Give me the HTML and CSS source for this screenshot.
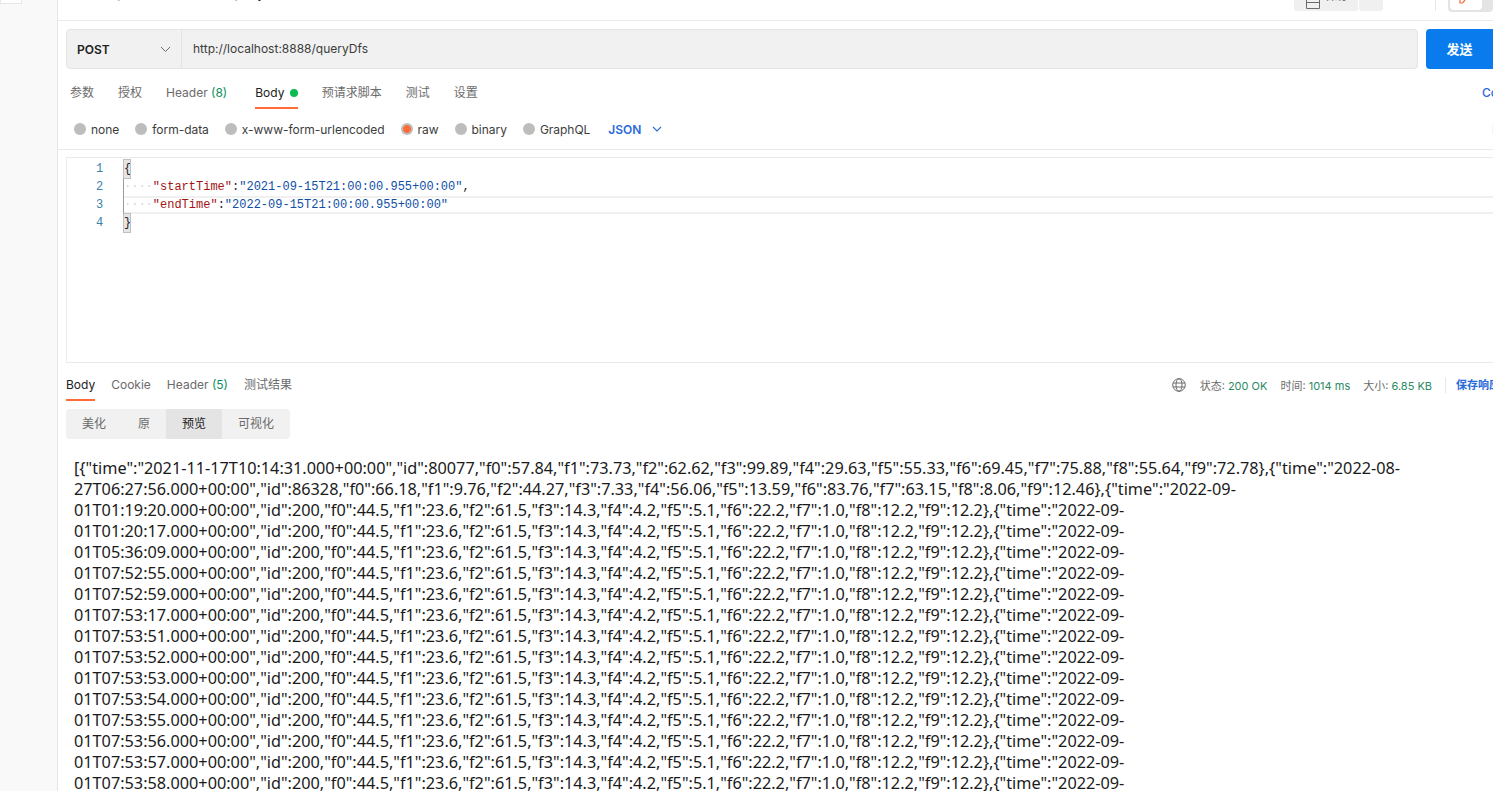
FILE: index.html
```html
<!DOCTYPE html>
<html lang="zh">
<head>
<meta charset="utf-8">
<title>queryDfs</title>
<link rel="stylesheet" href="styles.css">
</head>
<body>
<div class="app">
  <aside class="sidebar"><div class="side-tab"></div></aside>
  <main class="main">
    <header class="topbar">
      <div class="crumb">http://localhost:8888/queryDfs</div>
      <div class="top-actions">
        <div class="top-btn save">
          <svg class="save-icon" width="16" height="11" viewBox="0 0 16 11"><path d="M1.5 0v8.5h13V0M1.5 2.5h13" fill="none" stroke="#6b6b6b" stroke-width="1"/></svg>
          <span class="save-text">保存</span>
        </div>
        <div class="top-btn more"></div>
        <div class="top-divider"></div>
        <div class="mode-group">
          <div class="mode-on">
            <svg width="7" height="4" viewBox="0 0 7 4"><path d="M1 0v3h2.5L6 0" fill="none" stroke="#f26b3a" stroke-width="1.2"/></svg>
          </div>
        </div>
      </div>
    </header>

    <section class="urlbar">
      <div class="urlbox">
        <div class="method">
          <span>POST</span>
          <svg width="11" height="7" viewBox="0 0 11 7"><path d="M1 1l4.5 4.5L10 1" fill="none" stroke="#6b6b6b" stroke-width="1"/></svg>
        </div>
        <div class="url">http://localhost:8888/queryDfs</div>
      </div>
      <button class="send">发送</button>
    </section>

    <nav class="req-tabs">
      <span class="tab">参数</span>
      <span class="tab">授权</span>
      <span class="tab before-body">Header <em class="count">(8)</em></span>
      <span class="tab active">Body <i class="dot"></i></span>
      <span class="tab">预请求脚本</span>
      <span class="tab">测试</span>
      <span class="tab">设置</span>
      <span class="cookies">Cookies</span>
    </nav>

    <div class="body-types">
      <label class="radio"><i class="circle"></i>none</label>
      <label class="radio"><i class="circle"></i>form-data</label>
      <label class="radio"><i class="circle"></i>x-www-form-urlencoded</label>
      <label class="radio"><i class="circle checked"></i>raw</label>
      <label class="radio"><i class="circle"></i>binary</label>
      <label class="radio"><i class="circle"></i>GraphQL</label>
      <span class="json">JSON
        <svg width="10" height="6" viewBox="0 0 10 6"><path d="M1 1l4 4 4-4" fill="none" stroke="#2a6bd8" stroke-width="1.1"/></svg>
      </span>
      <span class="beautify">Beautify</span>
    </div>

    <section class="editor">
      <div class="gutter">
        <div>1</div><div>2</div><div>3</div><div>4</div>
      </div>
      <div class="code">
        <div class="ln"><span class="bracket">{</span></div>
        <div class="ln"><span class="ws">····</span><span class="key">"startTime"</span>:<span class="str">"2021-09-15T21:00:00.955+00:00"</span>,</div>
        <div class="ln current"><span class="ws">····</span><span class="key">"endTime"</span>:<span class="str">"2022-09-15T21:00:00.955+00:00"</span></div>
        <div class="ln"><span class="bracket">}</span></div>
      </div>
    </section>

    <section class="resp-head">
      <nav class="resp-tabs">
        <span class="rtab active">Body</span>
        <span class="rtab">Cookie</span>
        <span class="rtab">Header <em class="count">(5)</em></span>
        <span class="rtab">测试结果</span>
      </nav>
      <div class="resp-meta">
        <svg class="globe" width="14" height="14" viewBox="0 0 14 14" fill="none" stroke="#6b6b6b" stroke-width="1"><circle cx="7" cy="7" r="6.3"/><ellipse cx="7" cy="7" rx="3" ry="6.3"/><path d="M1 5h12M1 9h12"/></svg>
        <span class="meta">状态: <b>200 OK</b></span>
        <span class="meta">时间: <b>1014 ms</b></span>
        <span class="meta">大小: <b>6.85 KB</b></span>
        <span class="save-resp">保存响应</span>
      </div>
    </section>

    <div class="views">
      <span class="view v1">美化</span>
      <span class="view v2">原</span>
      <span class="view v3 on">预览</span>
      <span class="view v4">可视化</span>
    </div>

    <pre class="preview">[{"time":"2021-11-17T10:14:31.000+00:00","id":80077,"f0":57.84,"f1":73.73,"f2":62.62,"f3":99.89,"f4":29.63,"f5":55.33,"f6":69.45,"f7":75.88,"f8":55.64,"f9":72.78},{"time":"2022-08-
27T06:27:56.000+00:00","id":86328,"f0":66.18,"f1":9.76,"f2":44.27,"f3":7.33,"f4":56.06,"f5":13.59,"f6":83.76,"f7":63.15,"f8":8.06,"f9":12.46},{"time":"2022-09-
01T01:19:20.000+00:00","id":200,"f0":44.5,"f1":23.6,"f2":61.5,"f3":14.3,"f4":4.2,"f5":5.1,"f6":22.2,"f7":1.0,"f8":12.2,"f9":12.2},{"time":"2022-09-
01T01:20:17.000+00:00","id":200,"f0":44.5,"f1":23.6,"f2":61.5,"f3":14.3,"f4":4.2,"f5":5.1,"f6":22.2,"f7":1.0,"f8":12.2,"f9":12.2},{"time":"2022-09-
01T05:36:09.000+00:00","id":200,"f0":44.5,"f1":23.6,"f2":61.5,"f3":14.3,"f4":4.2,"f5":5.1,"f6":22.2,"f7":1.0,"f8":12.2,"f9":12.2},{"time":"2022-09-
01T07:52:55.000+00:00","id":200,"f0":44.5,"f1":23.6,"f2":61.5,"f3":14.3,"f4":4.2,"f5":5.1,"f6":22.2,"f7":1.0,"f8":12.2,"f9":12.2},{"time":"2022-09-
01T07:52:59.000+00:00","id":200,"f0":44.5,"f1":23.6,"f2":61.5,"f3":14.3,"f4":4.2,"f5":5.1,"f6":22.2,"f7":1.0,"f8":12.2,"f9":12.2},{"time":"2022-09-
01T07:53:17.000+00:00","id":200,"f0":44.5,"f1":23.6,"f2":61.5,"f3":14.3,"f4":4.2,"f5":5.1,"f6":22.2,"f7":1.0,"f8":12.2,"f9":12.2},{"time":"2022-09-
01T07:53:51.000+00:00","id":200,"f0":44.5,"f1":23.6,"f2":61.5,"f3":14.3,"f4":4.2,"f5":5.1,"f6":22.2,"f7":1.0,"f8":12.2,"f9":12.2},{"time":"2022-09-
01T07:53:52.000+00:00","id":200,"f0":44.5,"f1":23.6,"f2":61.5,"f3":14.3,"f4":4.2,"f5":5.1,"f6":22.2,"f7":1.0,"f8":12.2,"f9":12.2},{"time":"2022-09-
01T07:53:53.000+00:00","id":200,"f0":44.5,"f1":23.6,"f2":61.5,"f3":14.3,"f4":4.2,"f5":5.1,"f6":22.2,"f7":1.0,"f8":12.2,"f9":12.2},{"time":"2022-09-
01T07:53:54.000+00:00","id":200,"f0":44.5,"f1":23.6,"f2":61.5,"f3":14.3,"f4":4.2,"f5":5.1,"f6":22.2,"f7":1.0,"f8":12.2,"f9":12.2},{"time":"2022-09-
01T07:53:55.000+00:00","id":200,"f0":44.5,"f1":23.6,"f2":61.5,"f3":14.3,"f4":4.2,"f5":5.1,"f6":22.2,"f7":1.0,"f8":12.2,"f9":12.2},{"time":"2022-09-
01T07:53:56.000+00:00","id":200,"f0":44.5,"f1":23.6,"f2":61.5,"f3":14.3,"f4":4.2,"f5":5.1,"f6":22.2,"f7":1.0,"f8":12.2,"f9":12.2},{"time":"2022-09-
01T07:53:57.000+00:00","id":200,"f0":44.5,"f1":23.6,"f2":61.5,"f3":14.3,"f4":4.2,"f5":5.1,"f6":22.2,"f7":1.0,"f8":12.2,"f9":12.2},{"time":"2022-09-
01T07:53:58.000+00:00","id":200,"f0":44.5,"f1":23.6,"f2":61.5,"f3":14.3,"f4":4.2,"f5":5.1,"f6":22.2,"f7":1.0,"f8":12.2,"f9":12.2},{"time":"2022-09-</pre>
  </main>
</div>
</body>
</html>
```
FILE: styles.css
```css
* { box-sizing: border-box; }
html, body { margin: 0; height: 100%; overflow: hidden; background: #fff; }
body { font-family: Inter, "Noto Sans CJK SC", sans-serif; font-size: 12px; color: #6b6b6b; }
em, i { font-style: normal; }

.app { display: flex; width: 1493px; height: 791px; overflow: hidden; }
.sidebar { flex: 0 0 58px; background: #f9f9f9; border-right: 1px solid #e6e6e6; }
.side-tab { width: 22px; height: 4px; background: #fff; border: 1px solid #e6e6e6; border-top: 0; }
.main { flex: 0 0 1435px; width: 1435px; overflow: hidden; display: flex; flex-direction: column; }

.topbar { flex: 0 0 21px; height: 21px; border-bottom: 1px solid #ebebeb; display: flex; justify-content: space-between; overflow: hidden; }
.crumb { margin: -15px 0 0 44px; font-size: 12.5px; line-height: 18px; color: #212121; white-space: nowrap; }
.top-actions { display: flex; align-items: flex-start; }
.top-btn { height: 11px; background: #f0f0f0; border-radius: 0 0 3px 3px; overflow: hidden; }
.save { width: 64px; display: flex; gap: 4px; padding-left: 11px; }
.save-icon { flex: none; }
.save-text { font-size: 12px; line-height: 12px; margin-top: -10px; }
.more { width: 24px; margin-left: 1px; }
.top-divider { width: 1px; height: 11px; background: #e6e6e6; margin: 0 12px 0 52px; }
.mode-group { width: 45px; height: 12px; background: #e4e4e4; border-radius: 0 0 4px 4px; padding-left: 2px; overflow: hidden; }
.mode-on { width: 32px; height: 10px; background: #fff; border-radius: 0 0 4px 4px; padding: 0 0 0 9px; line-height: 0; }

.urlbar { display: flex; gap: 8px; margin: 8px 0 0 8px; height: 40px; flex: none; }
.urlbox { flex: 0 0 1352px; display: flex; background: #f1f1f1; border: 1px solid #e4e4e4; border-radius: 4px; }
.method { flex: 0 0 115px; display: flex; align-items: center; justify-content: space-between; padding: 0 10px; border-right: 1px solid #e4e4e4; font-weight: 600; color: #212121; }
.url { padding-left: 11px; line-height: 38px; color: #3c3c3c; font-size: 12px; }
.send { flex: 0 0 76px; background: #097bed; color: #fff; border: 0; border-radius: 4px 0 0 4px; font: 700 13px "Noto Sans CJK SC", sans-serif; padding: 0 9px 2px 0; }

.req-tabs { display: flex; height: 40px; margin: 0 0 0 12px; flex: none; align-items: flex-start; }
.tab { padding: 16px 0 6px; line-height: 16px; margin-right: 24px; border-bottom: 2px solid transparent; white-space: nowrap; }
.tab.before-body { margin-right: 28px; }
.tab.active { color: #212121; border-bottom-color: #ff6c37; }
.count { color: #0a8f5c; }
.dot { display: inline-block; width: 8px; height: 8px; border-radius: 50%; background: #0cbb52; margin-left: 2px; }
.cookies { margin: 0 11px 0 auto; padding-top: 16px; line-height: 16px; color: #2a6bd8; width: 0; white-space: nowrap; font-weight: 500; }

.body-types { height: 41px; flex: none; display: flex; align-items: center; gap: 16px; padding-left: 16px; border-bottom: 1px solid #ebebeb; color: #3c3c3c; letter-spacing: -.03px; }
.radio { display: flex; align-items: center; gap: 5px; }
.circle { width: 12px; height: 12px; border-radius: 50%; background: #bdbdbd; display: block; }
.circle.checked { background: radial-gradient(circle, #ff6c37 0 3.6px, #bdbdbd 4.2px); }
.json { display: flex; align-items: center; gap: 11px; color: #2a6bd8; font-weight: 600; margin-left: 2px; }
.beautify { margin: 0 1px 0 auto; width: 0; white-space: nowrap; color: #9c5cc0; }

.editor { margin: 7px 0 0 8px; height: 206px; flex: none; display: flex; border-top: 1px solid #ebebeb; border-left: 1px solid #ebebeb; border-bottom: 1px solid #ebebeb; font: 12px/18px "Liberation Mono", monospace; padding-top: 2px; }
.gutter { flex: 0 0 56px; text-align: center; padding-left: 9px; color: #3a82a8; }
.code { flex: 1; color: #222; }
.ln { height: 18px; border-left: 1px solid #9a9a9a; white-space: pre; }
.ln.current { box-shadow: inset 0 2px 0 #f0f0f0, inset 0 -2px 0 #f0f0f0; }
.bracket { display: inline-block; width: 6px; height: 18px; background: #e5e5e5; outline: 1px solid #c0c0c0; }
.ws { color: #d6d6d6; }
.key { color: #a31515; }
.str { color: #0f4fa8; }

.resp-head { display: flex; justify-content: space-between; height: 38px; flex: none; margin-left: 8px; }
.resp-tabs { display: flex; gap: 16px; }
.rtab { padding: 14px 0 6px; line-height: 16px; height: 38px; border-bottom: 2px solid transparent; white-space: nowrap; }
.rtab.active { color: #212121; border-bottom-color: #ff6c37; }
.resp-meta { display: flex; align-items: center; font-size: 11px; padding-top: 6px; white-space: nowrap; }
.globe { margin-right: 14px; }
.meta { margin-right: 13px; color: #6b6b6b; }
.meta b { font-weight: 400; color: #2b8a63; }
.save-resp { border-left: 1px solid #e6e6e6; padding-left: 10px; line-height: 16px; color: #2a6bd8; font-weight: 600; width: 48px; overflow: hidden; }

.views { display: flex; margin: 8px 0 0 8px; width: 224px; height: 30px; flex: none; background: #f1f1f1; border-radius: 4px; overflow: hidden; }
.view { line-height: 30px; text-align: center; }
.v1 { width: 56px; }
.v2 { width: 44px; }
.v3 { width: 56px; }
.v4 { width: 68px; }
.view.on { background: #e4e4e4; color: #212121; }

.preview { margin: 19px 0 0 16px; font: 16.25px/21px "Noto Sans", "Noto Sans CJK SC", sans-serif; color: #1a1a1a; white-space: pre; }
```
